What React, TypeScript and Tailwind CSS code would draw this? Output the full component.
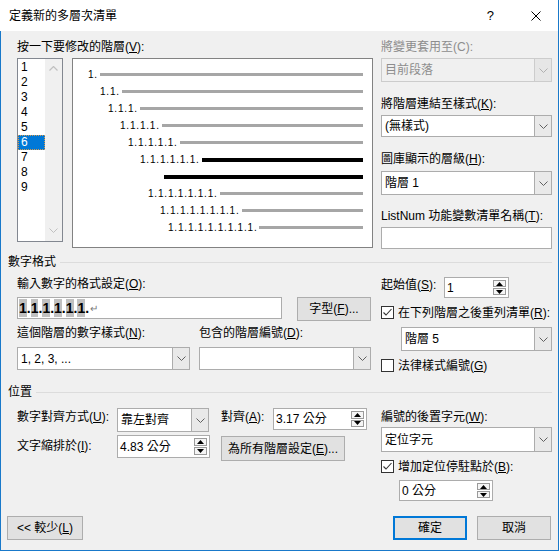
import React from "react";

const Chevron = ({ color = "#606060" }: { color?: string }) => (
  <svg width="9" height="5" viewBox="0 0 9 5">
    <polyline points="0.5,0.5 4.5,4.5 8.5,0.5" fill="none" stroke={color} strokeWidth="1" />
  </svg>
);

const ChevronUp = ({ color = "#c0c0c0" }: { color?: string }) => (
  <svg width="9" height="5" viewBox="0 0 9 5">
    <polyline points="0.5,4.5 4.5,0.5 8.5,4.5" fill="none" stroke={color} strokeWidth="1.2" />
  </svg>
);

function Combo({ cls, text, disabled }: { cls: string; text?: string; disabled?: boolean }) {
  return (
    <div className={`flex border ${disabled ? "border-[#cccccc] bg-[#f0f0f0]" : "border-[#acacac] bg-white"} ${cls}`}>
      <div className={`flex-1 flex items-center pl-[3px] whitespace-nowrap ${disabled ? "text-[#8d8d8d]" : "text-black"}`}>{text}</div>
      <div className={`w-[17px] flex items-center justify-center border-l ${disabled ? "border-[#cccccc] bg-[#e6e6e6]" : "border-[#acacac] bg-[#e9e9e9]"}`}>
        <Chevron color={disabled ? "#b0b0b0" : "#606060"} />
      </div>
    </div>
  );
}

function Spin({ cls, text }: { cls: string; text: string }) {
  return (
    <div className={`flex items-stretch border border-[#acacac] bg-white ${cls}`}>
      <div className="flex-1 flex items-center pl-[2px] whitespace-nowrap">{text}</div>
      <div className="w-[15px] flex flex-col gap-[1px] py-[2px] pr-[2px]">
        <div className="flex-1 border border-[#9a9a9a] bg-[#f5f5f5] flex items-center justify-center">
          <svg width="7" height="4" viewBox="0 0 7 4"><polygon points="3.5,0 7,4 0,4" fill="#000" /></svg>
        </div>
        <div className="flex-1 border border-[#9a9a9a] bg-[#f5f5f5] flex items-center justify-center">
          <svg width="7" height="4" viewBox="0 0 7 4"><polygon points="0,0 7,0 3.5,4" fill="#000" /></svg>
        </div>
      </div>
    </div>
  );
}

function Check({ checked }: { checked?: boolean }) {
  return (
    <div className="w-[13px] h-[13px] border border-[#333333] bg-white flex items-center justify-center shrink-0">
      {checked && (
        <svg width="11" height="11" viewBox="0 0 11 11">
          <polyline points="1.5,5.5 4,8 9.5,2" fill="none" stroke="#333333" strokeWidth="1.1" />
        </svg>
      )}
    </div>
  );
}

function Btn({ cls, children }: { cls: string; children: React.ReactNode }) {
  return <div className={`flex items-center justify-center bg-[#e1e1e1] whitespace-nowrap ${cls}`}>{children}</div>;
}

const rows: { pl: string; t: string; black?: boolean }[] = [
  { pl: "pl-[15px]", t: "1." },
  { pl: "pl-[27px]", t: "1.1." },
  { pl: "pl-[35px]", t: "1.1.1." },
  { pl: "pl-[47px]", t: "1.1.1.1." },
  { pl: "pl-[55px]", t: "1.1.1.1.1." },
  { pl: "pl-[67px]", t: "1.1.1.1.1.1.", black: true },
  { pl: "pl-[89px]", t: "", black: true },
  { pl: "pl-[75px]", t: "1.1.1.1.1.1.1." },
  { pl: "pl-[87px]", t: "1.1.1.1.1.1.1.1." },
  { pl: "pl-[95px]", t: "1.1.1.1.1.1.1.1.1." },
];

export default function App() {
  return (
    <div className="w-[559px] h-[551px] bg-[#f0f0f0] flex flex-col overflow-hidden text-[12px] leading-[14px] text-black font-['Liberation_Sans','Noto_Sans_CJK_TC',sans-serif]">
      {/* Title bar */}
      <div className="h-[31px] shrink-0 bg-white flex items-center border-r border-[#1979ca]">
        <span className="ml-[9px] text-[12px]">定義新的多層次清單</span>
        <span className="ml-auto text-[13px] leading-[14px]">?</span>
        <svg className="ml-[37px] mr-[17px]" width="10" height="10" viewBox="0 0 10 10">
          <line x1="0.5" y1="0.5" x2="9.5" y2="9.5" stroke="#000" strokeWidth="1" />
          <line x1="9.5" y1="0.5" x2="0.5" y2="9.5" stroke="#000" strokeWidth="1" />
        </svg>
      </div>

      {/* Body */}
      <div className="flex-1 flex flex-col border-x border-b border-[#1979ca]">
        {/* Top section */}
        <div className="mt-[9px] pl-[16px] pr-[6px] grid grid-cols-[356px_171px] gap-x-[8px]">
          <div className="flex flex-col">
            <div className="h-[14px] whitespace-nowrap">按一下要修改的階層(<u>V</u>):</div>
            <div className="mt-[4px] flex">
              <div className="w-[46px] h-[184px] border border-[#828790] bg-white flex">
                <div className="w-[27px] pt-[1px] flex flex-col">
                  {["1", "2", "3", "4", "5", "6", "7", "8", "9"].map((n) => (
                    <div
                      key={n}
                      className={`h-[15px] leading-[15px] pl-[3px] ${n === "6" ? "bg-[#0078d7] text-white outline outline-1 outline-dotted outline-[#d49a50] -outline-offset-1" : ""}`}
                    >
                      {n}
                    </div>
                  ))}
                </div>
                <div className="flex-1 bg-[#f0f0f0] flex flex-col items-center justify-between pt-[7px] pb-[8px]">
                  <ChevronUp />
                  <Chevron color="#c0c0c0" />
                </div>
              </div>
              <div className="ml-[9px] w-[301px] h-[190px] border border-[#828282] bg-white pt-[7px] pr-[9px] flex flex-col">
                {rows.map((r, i) => (
                  <div key={i} className={`h-[17px] flex items-center ${r.pl}`}>
                    {r.t && <span className="text-[10px] leading-[12px] tracking-[0.8px] whitespace-nowrap">{r.t}</span>}
                    <div className={`flex-1 ml-[2px] ${r.black ? "h-[4px] bg-black" : "h-[3px] bg-[#a6a6a6]"}`} />
                  </div>
                ))}
              </div>
            </div>
          </div>
          <div className="flex flex-col">
            <div className="h-[14px] whitespace-nowrap text-[#8d8d8d]">將變更套用至(C):</div>
            <Combo cls="mt-[4px] h-[24px]" text="目前段落" disabled />
            <div className="mt-[15px] h-[14px] whitespace-nowrap">將階層連結至樣式(<u>K</u>):</div>
            <Combo cls="mt-[4px] h-[22px]" text="(無樣式)" />
            <div className="mt-[15px] h-[14px] whitespace-nowrap">圖庫顯示的層級(<u>H</u>):</div>
            <Combo cls="mt-[5px] h-[24px]" text="階層 1" />
            <div className="mt-[14px] h-[14px] whitespace-nowrap">ListNum 功能變數清單名稱(<u>T</u>):</div>
            <div className="mt-[4px] h-[22px] border border-[#acacac] bg-white" />
          </div>
        </div>

        {/* 數字格式 header */}
        <div className="mt-[6px] pl-[7px] pr-[6px] h-[14px] flex items-center">
          <span className="whitespace-nowrap">數字格式</span>
          <div className="ml-[4px] flex-1 h-px bg-[#dcdcdc]" />
        </div>

        {/* Number format */}
        <div className="pl-[16px] pr-[6px] grid grid-cols-[354px_171px] gap-x-[10px]">
          <div className="flex flex-col">
            <div className="mt-[8px] h-[14px] whitespace-nowrap">輸入數字的格式設定(<u>O</u>):</div>
            <div className="mt-[6px] flex items-start">
              <div className="w-[265px] h-[22px] border border-[#acacac] bg-white flex items-stretch py-[1px] pl-[1px] text-[14px] font-bold">
                {["1", ".", "1", ".", "1", ".", "1", ".", "1", ".", "1", "."].map((c, i) => (
                  <span key={i} className={`flex items-center ${c === "1" ? "bg-[#c0c0c0]" : ""}`}>{c}</span>
                ))}
                <span className="flex items-center text-[10px] font-normal text-[#7a7a7a] ml-[1px] pt-[2px]">↵</span>
              </div>
              <Btn cls="ml-[15px] w-[74px] h-[24px] border border-[#adadad]">字型(<u>F</u>)...</Btn>
            </div>
            <div className="mt-[5px] grid grid-cols-[173px_172px] gap-x-[9px]">
              <div className="h-[14px] whitespace-nowrap">這個階層的數字樣式(<u>N</u>):</div>
              <div className="h-[14px] whitespace-nowrap">包含的階層編號(<u>D</u>):</div>
              <Combo cls="mt-[7px] h-[23px]" text="1, 2, 3, ..." />
              <Combo cls="mt-[7px] h-[23px]" text="" />
            </div>
          </div>
          <div className="flex flex-col">
            <div className="mt-[8px] flex items-start">
              <div className="w-[63px] mt-[1px] h-[14px] whitespace-nowrap">起始值(<u>S</u>):</div>
              <Spin cls="w-[65px] h-[21px]" text="1" />
            </div>
            <div className="mt-[8px] h-[13px] flex items-center">
              <Check checked />
              <span className="ml-[4px] whitespace-nowrap">在下列階層之後重列清單(<u>R</u>):</span>
            </div>
            <Combo cls="mt-[8px] ml-[20px] h-[24px]" text="階層 5" />
            <div className="mt-[8px] h-[13px] flex items-center">
              <Check />
              <span className="ml-[4px] whitespace-nowrap">法律樣式編號(<u>G</u>)</span>
            </div>
          </div>
        </div>

        {/* 位置 header */}
        <div className="mt-[13px] pl-[7px] pr-[6px] h-[14px] flex items-center">
          <span className="whitespace-nowrap">位置</span>
          <div className="ml-[4px] flex-1 h-px bg-[#dcdcdc]" />
        </div>

        {/* Position */}
        <div className="pl-[16px] pr-[6px] grid grid-cols-[354px_171px] gap-x-[10px]">
          <div className="flex flex-col">
            <div className="mt-[9px] flex items-start">
              <div className="w-[100px] mt-[2px] h-[14px] whitespace-nowrap">數字對齊方式(<u>U</u>):</div>
              <Combo cls="w-[92px] h-[24px]" text="靠左對齊" />
              <div className="ml-[12px] w-[52px] mt-[2px] h-[14px] whitespace-nowrap">對齊(<u>A</u>):</div>
              <Spin cls="w-[94px] h-[22px]" text="3.17 公分" />
            </div>
            <div className="mt-[3px] flex items-start">
              <div className="w-[100px] mt-[4px] h-[14px] whitespace-nowrap">文字縮排於(<u>I</u>):</div>
              <Spin cls="w-[93px] h-[23px]" text="4.83 公分" />
              <Btn cls="ml-[11px] mt-[1px] w-[124px] h-[25px] border border-[#adadad]">為所有階層設定(<u>E</u>)...</Btn>
            </div>
          </div>
          <div className="flex flex-col">
            <div className="mt-[11px] h-[14px] whitespace-nowrap">編號的後置字元(<u>W</u>):</div>
            <Combo cls="mt-[3px] h-[25px]" text="定位字元" />
            <div className="mt-[8px] h-[13px] flex items-center">
              <Check checked />
              <span className="ml-[4px] whitespace-nowrap">增加定位停駐點於(<u>B</u>):</span>
            </div>
            <Spin cls="mt-[7px] ml-[18px] w-[94px] h-[21px]" text="0 公分" />
          </div>
        </div>

        {/* Buttons */}
        <div className="mt-[15px] pl-[6px] pr-[7px] flex items-center">
          <Btn cls="w-[76px] h-[24px] border border-[#adadad]">&lt;&lt; 較少(<u>L</u>)</Btn>
          <Btn cls="ml-auto w-[74px] h-[24px] border-2 border-[#0078d7]">確定</Btn>
          <Btn cls="ml-[10px] w-[74px] h-[24px] border border-[#adadad]">取消</Btn>
        </div>
      </div>
    </div>
  );
}
